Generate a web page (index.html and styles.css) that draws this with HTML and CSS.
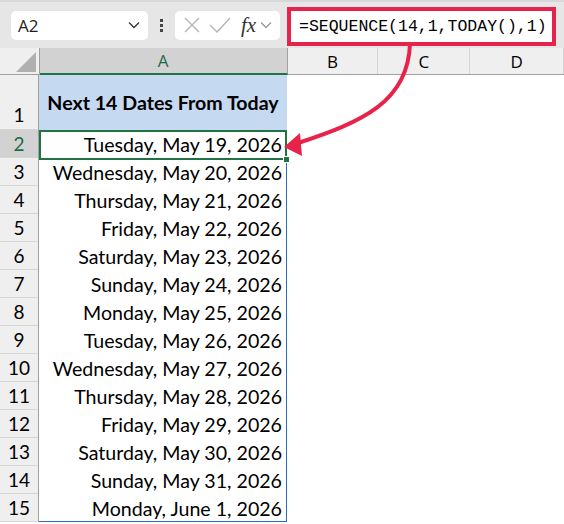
FILE: index.html
```html
<!DOCTYPE html>
<html lang="en">
  <head>
    <meta charset="UTF-8" />
    <title>SEQUENCE dates</title>
    <link rel="stylesheet" href="styles.css">
  </head>
  <body>
    <div class="page">
      <div class="toolbar">
        <div class="name-box">
          <span>A2</span>
          <svg class="chev" width="12" height="8" viewBox="0 0 12 8"><path d="M1 1.5 L6 6.5 L11 1.5" fill="none" stroke="#333" stroke-width="1.3"/></svg>
        </div>
        <div class="dots"><i></i><i></i><i></i></div>
        <div class="fx-box">
          <svg width="18" height="18" viewBox="0 0 18 18"><path d="M2 2 L16 16 M16 2 L2 16" stroke="#b4b4b4" stroke-width="1.4"/></svg>
          <svg width="22" height="18" viewBox="0 0 22 18"><path d="M1 9 L8 16 L21 2" fill="none" stroke="#b4b4b4" stroke-width="1.4"/></svg>
          <span class="fx">fx</span>
          <svg class="chev" width="12" height="8" viewBox="0 0 12 8"><path d="M1 1.5 L6 6.5 L11 1.5" fill="none" stroke="#999" stroke-width="1.3"/></svg>
        </div>
        <div class="formula">=SEQUENCE(14,1,TODAY(),1)</div>
      </div>

      <div class="col-heads">
        <div class="corner"><span class="tri"></span></div>
        <div class="ch ch-a">A</div>
        <div class="ch ch-b">B</div>
        <div class="ch ch-c">C</div>
        <div class="ch ch-d">D</div>
      </div>

      <div class="body">
        <div class="row-heads">
          <div class="rh rh-1">1</div>
          <div class="rh on">2</div>
          <div class="rh">3</div>
          <div class="rh">4</div>
          <div class="rh">5</div>
          <div class="rh">6</div>
          <div class="rh">7</div>
          <div class="rh">8</div>
          <div class="rh">9</div>
          <div class="rh">10</div>
          <div class="rh">11</div>
          <div class="rh">12</div>
          <div class="rh">13</div>
          <div class="rh">14</div>
          <div class="rh">15</div>
        </div>
        <div class="col-a">
          <div class="title">Next 14 Dates From Today</div>
          <div class="range">
            <div class="cell active">Tuesday, May 19, 2026</div>
            <div class="cell">Wednesday, May 20, 2026</div>
            <div class="cell">Thursday, May 21, 2026</div>
            <div class="cell">Friday, May 22, 2026</div>
            <div class="cell">Saturday, May 23, 2026</div>
            <div class="cell">Sunday, May 24, 2026</div>
            <div class="cell">Monday, May 25, 2026</div>
            <div class="cell">Tuesday, May 26, 2026</div>
            <div class="cell">Wednesday, May 27, 2026</div>
            <div class="cell">Thursday, May 28, 2026</div>
            <div class="cell">Friday, May 29, 2026</div>
            <div class="cell">Saturday, May 30, 2026</div>
            <div class="cell">Sunday, May 31, 2026</div>
            <div class="cell">Monday, June 1, 2026</div>
          </div>
        </div>
      </div>

      <!-- arrow from the formula to A2 -->
      <svg class="arrow" width="564" height="524" viewBox="0 0 564 524">
        <path d="M410 44 C 408 102, 362 122, 298 143" fill="none" stroke="#e8234a" stroke-width="4" stroke-linecap="round"/>
        <path d="M284 147 L300 133 L302 156 Z" fill="#e8234a"/>
      </svg>
    </div>
  </body>
</html>
```

FILE: styles.css
```css
html,
body {
  margin: 0;
  padding: 0;
  background: #fff;
}

.page {
  position: relative;
  width: 564px;
  height: 524px;
  overflow: hidden;
  font-family: Lato, "Open Sans", sans-serif;
  color: #000;
}

/* 상단 수식 입력줄 */
.toolbar {
  height: 48px;
  box-sizing: border-box;
  background: #e6e6e6;
  border-top: 2px solid #d8d8d8;
  display: flex;
  align-items: center;
  padding: 0 0 0 11px;
}

.name-box {
  width: 137px;
  height: 29px;
  box-sizing: border-box;
  background: #fff;
  border-radius: 5px;
  display: flex;
  align-items: center;
  justify-content: space-between;
  padding: 0 8px 0 7px;
  font-family: "Open Sans", sans-serif;
  font-size: 17px;
  color: #222;
}

.dots {
  width: 27px;
  display: flex;
  flex-direction: column;
  align-items: center;
  gap: 2px;
}

.dots i {
  display: block;
  width: 3px;
  height: 3px;
  background: #444;
}

.fx-box {
  width: 105px;
  height: 29px;
  box-sizing: border-box;
  background: #fff;
  border-radius: 5px;
  display: flex;
  align-items: center;
  gap: 8px;
  padding: 0 4px 0 8px;
}

.fx {
  font-family: "Liberation Serif", serif;
  font-style: italic;
  font-size: 21px;
  color: #333;
  margin-left: 2px;
  margin-right: -4px;
}

.formula {
  margin-left: 7px;
  width: 269px;
  height: 39px;
  margin-top: 2px;
  box-sizing: border-box;
  border: 4px solid #e5234c;
  background: #fff;
  font-family: "Liberation Mono", monospace;
  font-size: 16.5px;
  line-height: 31px;
  padding-left: 8px;
  white-space: nowrap;
}

/* 열 머리글 */
.col-heads {
  display: flex;
  height: 27px;
  box-sizing: border-box;
  background: #efefef;
  border-bottom: 1px solid #a0a0a0;
}

.corner {
  width: 39px;
  border-right: 1px solid #a0a0a0;
  position: relative;
}

.tri {
  position: absolute;
  right: 3px;
  bottom: 2px;
  width: 0;
  height: 0;
  border-left: 20px solid transparent;
  border-bottom: 20px solid #b0b0b0;
}

.ch {
  display: flex;
  align-items: center;
  justify-content: center;
  font-family: "Open Sans", sans-serif;
  font-size: 17px;
  box-sizing: border-box;
  border-right: 1px solid #d4d4d4;
}

.ch-a {
  width: 248px;
  background: #d2d2d2;
  color: #1e6b44;
  border-bottom: 2px solid #217346;
  border-right-color: #a0a0a0;
  margin-bottom: -1px;
}

.ch-b {
  width: 91px;
}

.ch-c {
  width: 92px;
}

.ch-d {
  width: 94px;
}

/* 행 머리글 + 셀 */
.body {
  display: flex;
}

.row-heads {
  width: 39px;
  box-sizing: border-box;
  border-right: 1px solid #a0a0a0;
  background: #efefef;
}

.rh {
  height: 28px;
  box-sizing: border-box;
  border-bottom: 1px solid #d6d6d6;
  font-size: 19px;
  line-height: 28px;
  text-align: center;
}

.rh-1 {
  height: 55px;
  line-height: 30px;
  padding-top: 25px;
}

.rh.on {
  background: #d2d2d2;
  color: #1e6b44;
}

.col-a {
  width: 248px;
}

.title {
  height: 55px;
  background: #c5d9f1;
  font-weight: bold;
  font-size: 19.6px;
  display: flex;
  align-items: center;
  justify-content: center;
}

.range {
  border: 1px solid #2b6cc4;
  border-left: none;
  box-sizing: border-box;
  height: 392px;
}

.cell {
  height: 28px;
  font-size: 19.6px;
  line-height: 28px;
  text-align: right;
  padding-right: 4px;
  position: relative;
  white-space: nowrap;
}

.cell.active {
  outline: 2px solid #217346;
  outline-offset: -1px;
  margin-left: 1px;
}

/* 채우기 핸들 */
.cell.active::after {
  content: "";
  position: absolute;
  right: -4px;
  bottom: -4px;
  width: 5px;
  height: 5px;
  background: #217346;
  border: 1px solid #fff;
}

.arrow {
  position: absolute;
  top: 0;
  left: 0;
  pointer-events: none;
}
```
